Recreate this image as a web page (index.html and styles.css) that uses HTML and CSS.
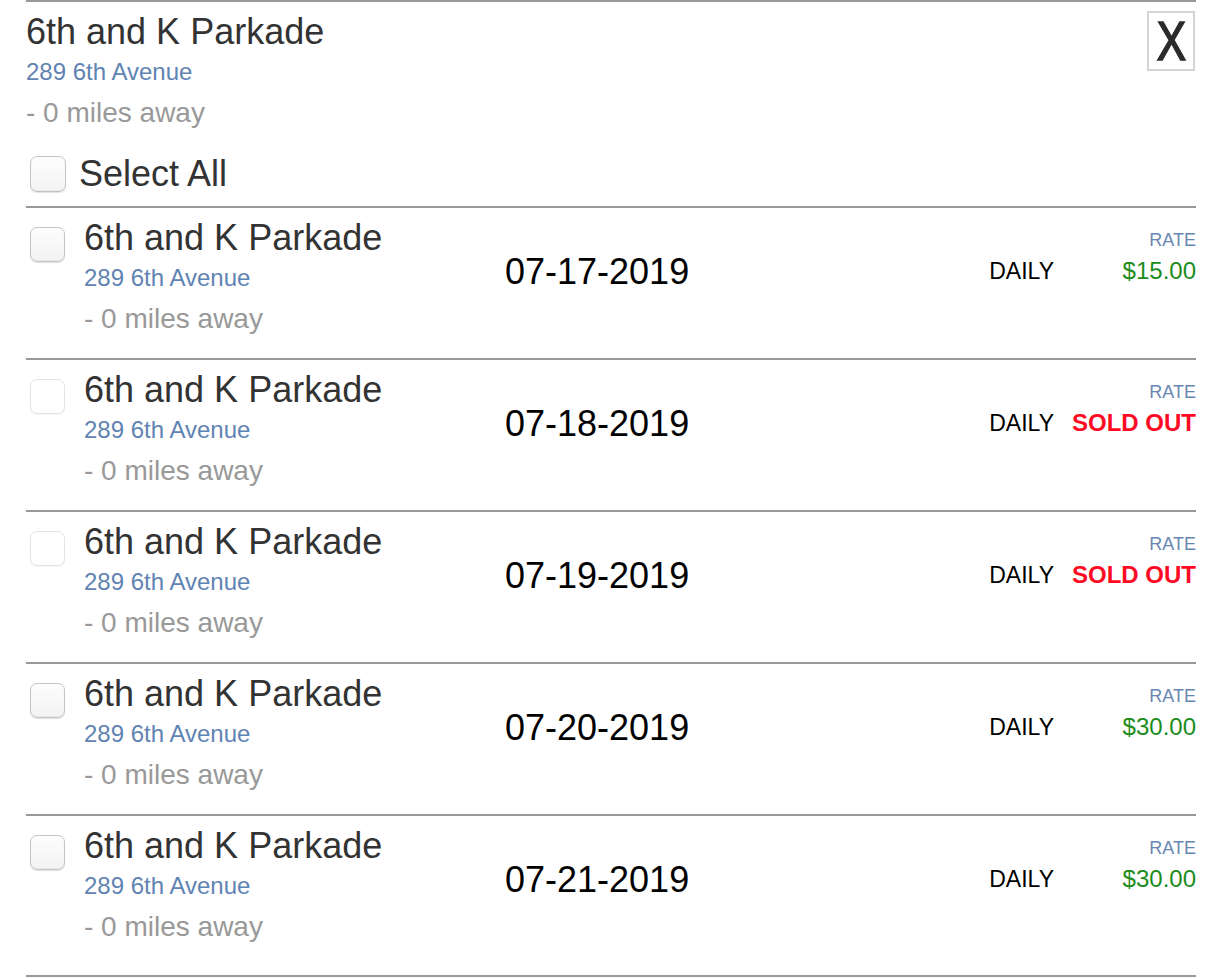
FILE: index.html
```html
<!DOCTYPE html>
<html>
<head>
<meta charset="utf-8">
<link rel="stylesheet" href="styles.css">
</head>
<body>
<div class="panel">
  <div class="header">
    <div class="header-top">
      <div class="info">
        <div class="title">6th and K Parkade</div>
        <div class="address">289 6th Avenue</div>
        <div class="miles">- 0 miles away</div>
      </div>
      <button class="close"><span class="close-x">X</span></button>
    </div>
    <label class="select-all"><input type="checkbox" class="cb"><span>Select All</span></label>
  </div>

  <div class="row">
    <input type="checkbox" class="cb row-cb">
    <div class="info row-info">
      <div class="title">6th and K Parkade</div>
      <div class="address">289 6th Avenue</div>
      <div class="miles">- 0 miles away</div>
    </div>
    <div class="date">07-17-2019</div>
    <div class="rate">
      <div class="rate-label">RATE</div>
      <div class="rate-line"><span class="daily">DAILY</span><span class="price">$15.00</span></div>
    </div>
  </div>

  <div class="row">
    <input type="checkbox" class="cb row-cb" disabled>
    <div class="info row-info">
      <div class="title">6th and K Parkade</div>
      <div class="address">289 6th Avenue</div>
      <div class="miles">- 0 miles away</div>
    </div>
    <div class="date">07-18-2019</div>
    <div class="rate">
      <div class="rate-label">RATE</div>
      <div class="rate-line"><span class="daily">DAILY</span><span class="price sold">SOLD OUT</span></div>
    </div>
  </div>

  <div class="row">
    <input type="checkbox" class="cb row-cb" disabled>
    <div class="info row-info">
      <div class="title">6th and K Parkade</div>
      <div class="address">289 6th Avenue</div>
      <div class="miles">- 0 miles away</div>
    </div>
    <div class="date">07-19-2019</div>
    <div class="rate">
      <div class="rate-label">RATE</div>
      <div class="rate-line"><span class="daily">DAILY</span><span class="price sold">SOLD OUT</span></div>
    </div>
  </div>

  <div class="row">
    <input type="checkbox" class="cb row-cb">
    <div class="info row-info">
      <div class="title">6th and K Parkade</div>
      <div class="address">289 6th Avenue</div>
      <div class="miles">- 0 miles away</div>
    </div>
    <div class="date">07-20-2019</div>
    <div class="rate">
      <div class="rate-label">RATE</div>
      <div class="rate-line"><span class="daily">DAILY</span><span class="price">$30.00</span></div>
    </div>
  </div>

  <div class="row">
    <input type="checkbox" class="cb row-cb">
    <div class="info row-info">
      <div class="title">6th and K Parkade</div>
      <div class="address">289 6th Avenue</div>
      <div class="miles">- 0 miles away</div>
    </div>
    <div class="date">07-21-2019</div>
    <div class="rate">
      <div class="rate-label">RATE</div>
      <div class="rate-line"><span class="daily">DAILY</span><span class="price">$30.00</span></div>
    </div>
  </div>
</div>
</body>
</html>
```

FILE: styles.css
```css
html, body {
  margin: 0;
  padding: 0;
  background: #fff;
}

body {
  font-family: "Liberation Sans", Arial, Helvetica, sans-serif;
  color: #333;
}

.panel {
  width: 1170px;
  margin-left: 26px;
}

.header {
  border-top: 2px solid #999;
  padding-top: 10px;
  padding-bottom: 12px;
}

.header-top {
  display: flex;
  justify-content: space-between;
  align-items: flex-start;
}

.title {
  font-size: 36px;
  line-height: 40px;
  color: #333;
}

.address {
  font-size: 24px;
  line-height: 40px;
  color: #5f83b2;
}

.miles {
  font-size: 28px;
  line-height: 42px;
  color: #999;
}

.close {
  margin: -1px 1px 0 0;
  width: 48px;
  height: 60px;
  padding: 0;
  border: 2px solid #d4d4d4;
  background: #fff;
  display: flex;
  align-items: center;
  justify-content: center;
}

.close-x {
  display: inline-block;
  font-family: "Liberation Sans", Arial, sans-serif;
  font-size: 55px;
  line-height: 56px;
  color: #2b2b2b;
  transform: scaleX(0.8);
  -webkit-text-stroke: 1.6px #2b2b2b;
}

.select-all {
  display: flex;
  align-items: center;
  height: 40px;
  margin-top: 20px;
  font-size: 36px;
  line-height: 40px;
  color: #333;
}

.select-all .cb {
  margin: 0 13px 0 4px;
  width: 36px;
  height: 36px;
}

.cb {
  -webkit-appearance: none;
  appearance: none;
  box-sizing: border-box;
  width: 35px;
  height: 35px;
  margin: 0;
  border: 1px solid #c4c4c4;
  border-radius: 7px;
  background: linear-gradient(#fdfdfd, #f3f3f3);
  box-shadow: 0 1px 1px rgba(0, 0, 0, 0.12), inset 0 -1px 1px rgba(0, 0, 0, 0.05);
  flex-shrink: 0;
}

.cb:disabled {
  border-color: #e3e3e3;
  background: #fff;
  box-shadow: 0 1px 1px rgba(0, 0, 0, 0.04);
}

.row {
  display: flex;
  align-items: flex-start;
  border-top: 2px solid #999;
  padding: 10px 0 18px;
}

.row:last-child {
  padding-bottom: 27px;
  border-bottom: 2px solid #999;
}

.row-cb {
  margin: 9px 0 0 4px;
}

.row-info {
  margin-left: 19px;
  width: 421px;
}

.date {
  padding-top: 34px;
  font-size: 36px;
  line-height: 40px;
  color: #000;
}

.rate {
  margin-left: auto;
  padding-top: 12px;
  text-align: right;
}

.rate-label {
  font-size: 18px;
  line-height: 20px;
  color: #6986b2;
}

.rate-line {
  display: flex;
  align-items: baseline;
  margin-top: 6px;
  line-height: 30px;
}

.daily {
  font-size: 23px;
  color: #000;
}

.price {
  min-width: 124px;
  margin-left: 18px;
  font-size: 24px;
  color: #1c8c1c;
  text-align: right;
}

.price.sold {
  color: #ff0a24;
  font-weight: bold;
}
```
